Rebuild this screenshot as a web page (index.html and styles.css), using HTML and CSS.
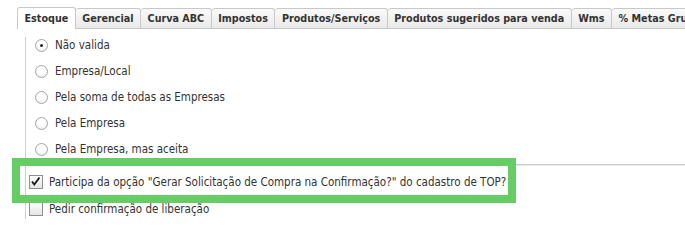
FILE: index.html
```html
<!DOCTYPE html>
<html lang="pt-BR">
<head>
<meta charset="utf-8">
<title>Estoque</title>
<link rel="stylesheet" href="styles.css">
</head>
<body>
<div class="page">
  <div class="tabs">
    <div class="tab active">Estoque</div>
    <div class="tab">Gerencial</div>
    <div class="tab">Curva ABC</div>
    <div class="tab">Impostos</div>
    <div class="tab">Produtos/Serviços</div>
    <div class="tab">Produtos sugeridos para venda</div>
    <div class="tab">Wms</div>
    <div class="tab">% Metas Grupo</div>
  </div>
  <div class="panel">
    <div class="radios">
      <div class="row"><span class="radio checked"></span><span class="label">Não valida</span></div>
      <div class="row"><span class="radio"></span><span class="label">Empresa/Local</span></div>
      <div class="row"><span class="radio"></span><span class="label">Pela soma de todas as Empresas</span></div>
      <div class="row"><span class="radio"></span><span class="label">Pela Empresa</span></div>
      <div class="row"><span class="radio"></span><span class="label">Pela Empresa, mas aceita</span></div>
    </div>
    <div class="separator"></div>
    <div class="checks">
      <div class="row"><span class="check checked"><svg viewBox="0 0 13 13" width="13" height="13"><path d="M3 6.5 L5.3 9.5 L10.5 2.5" fill="none" stroke="#1a1a1a" stroke-width="1.9"/></svg></span><span class="label">Participa da opção "Gerar Solicitação de Compra na Confirmação?" do cadastro de TOP?</span></div>
      <div class="row"><span class="check"></span><span class="label">Pedir confirmação de liberação</span></div>
    </div>
  </div>
  <div class="highlight"></div>
</div>
</body>
</html>
```
FILE: styles.css
```css
html, body {
  margin: 0;
  padding: 0;
  background: #ffffff;
}
body {
  font-family: "DejaVu Sans Condensed", "DejaVu Sans", sans-serif;
  font-size: 11.5px;
  color: #333333;
  overflow: hidden;
}
.page {
  position: relative;
  width: 685px;
  height: 219px;
  overflow: hidden;
}
.tabs {
  display: flex;
  padding: 7px 0 0 17px;
  white-space: nowrap;
  height: 29px;
  box-sizing: border-box;
  align-items: flex-end;
  overflow: hidden;
}
.tab {
  box-sizing: border-box;
  height: 21px;
  line-height: 19px;
  padding: 0 6.5px;
  font-size: 10.7px;
  font-weight: bold;
  color: #333;
  border: 1px solid #c8c8c8;
  border-left: none;
  border-radius: 3px 3px 0 0;
  background: linear-gradient(#fafafa, #e9e9e9);
  flex-shrink: 0;
}
.tab.active {
  height: 22px;
  line-height: 21px;
  border-left: 1px solid #c8c8c8;
  border-bottom: none;
  background: #ffffff;
}
.panel {
  margin: 8px 0 0 25px;
  border-left: 1px solid #cfcfcf;
  height: 182px;
}
.radios {
  display: flex;
  flex-direction: column;
  gap: 10px;
  padding-left: 9px;
}
.row {
  display: flex;
  align-items: center;
  height: 16px;
  white-space: nowrap;
}
.radio {
  box-sizing: border-box;
  width: 13px;
  height: 13px;
  border-radius: 50%;
  border: 1px solid #a6a6a6;
  background: radial-gradient(circle at 50% 35%, #ffffff 40%, #e6e6e6 100%);
  margin-right: 7px;
  position: relative;
  flex-shrink: 0;
}
.radio.checked::after {
  content: "";
  position: absolute;
  left: 4px;
  top: 4px;
  width: 3px;
  height: 3px;
  border-radius: 50%;
  background: #222;
}
.separator {
  margin-top: 7px;
  border-top: 1px solid #c8cccc;
  border-bottom: 1px solid #e8eaea;
  height: 0;
}
.checks {
  display: flex;
  flex-direction: column;
  gap: 11px;
  padding: 8px 0 0 3px;
}
.check {
  box-sizing: border-box;
  width: 14px;
  height: 14px;
  border: 1px solid #8e8e8e;
  background: linear-gradient(#ffffff, #e4e4e4);
  margin-right: 6px;
  flex-shrink: 0;
  display: flex;
}
.check svg {
  margin: -1px 0 0 -1px;
}
.highlight {
  position: absolute;
  left: 12px;
  top: 158px;
  width: 504px;
  height: 45px;
  box-sizing: border-box;
  border: 8px solid #66cc66;
}
```
